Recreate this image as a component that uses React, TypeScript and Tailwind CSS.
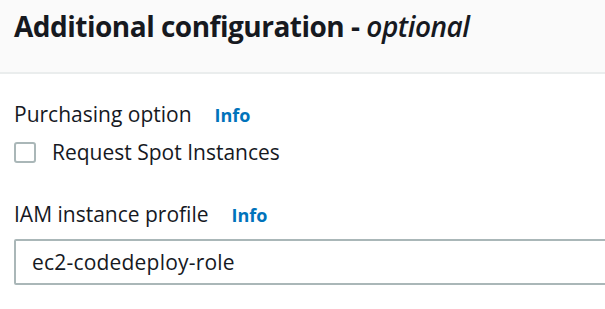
export default function App() {
  return (
    <div className="w-[605px] h-[309px] overflow-hidden bg-white font-['Open_Sans',sans-serif] text-[#16191f]">
      <div className="h-[74px] bg-[#fafafa] border-b-2 border-[#eaeded] pl-[14px] pt-[8px]">
        <h2 className="text-[28px] font-bold leading-[36px] tracking-[-0.5px]">
          Additional configuration - <span className="italic font-semibold">optional</span>
        </h2>
      </div>
      <div className="pl-[14px] pt-[26px]">
        <div className="flex items-baseline gap-[23px] h-[28px] leading-[28px]">
          <span className="text-[21px]">Purchasing option</span>
          <span className="text-[18px] font-bold text-[#0073bb]">Info</span>
        </div>
        <label className="flex items-center gap-[16px] mt-[10px] h-[28px]">
          <span className="w-[22px] h-[21px] rounded-[3px] border-2 border-[#aab7b8] bg-white" />
          <span className="text-[21px] leading-[28px]">Request Spot Instances</span>
        </label>
        <div className="flex items-baseline gap-[23px] h-[28px] leading-[28px] mt-[34px]">
          <span className="text-[21px]">IAM instance profile</span>
          <span className="text-[18px] font-bold text-[#0073bb]">Info</span>
        </div>
        <div className="mt-[11px] h-[46px] w-[620px] border-2 border-[#aab7b8] rounded-[2px] flex items-center pl-[16px] text-[21px] leading-[28px] tracking-[0.2px]">
          ec2-codedeploy-role
        </div>
      </div>
    </div>
  );
}
